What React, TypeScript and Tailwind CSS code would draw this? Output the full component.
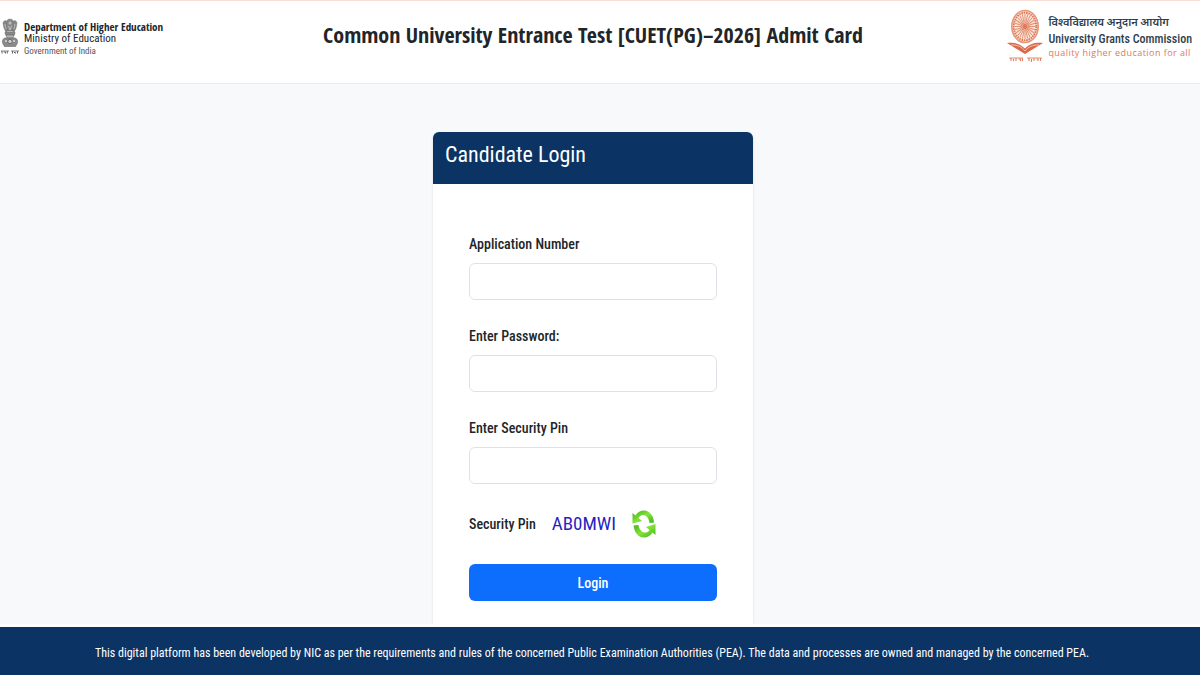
import { useState } from 'react'

const spokes = Array.from({ length: 24 }, (_, i) => i * 15)

function Emblem() {
  return (
    <svg viewBox="0 0 20 38" className="w-5 h-10 shrink-0" aria-hidden="true">
      <g fill="#8a8a8a" stroke="#6c6c6c" strokeWidth="0.6">
        <path d="M7 3 C7 0.5 13 0.5 13 3 L14 8 L12.5 13 H7.5 L6 8 Z" />
        <path d="M6.5 3 C3.5 2 2.5 5 3.5 7 L4 10 L6 14 L7.5 13 L6 8 Z" />
        <path d="M13.5 3 C16.5 2 17.5 5 16.5 7 L16 10 L14 14 L12.5 13 L14 8 Z" />
        <path d="M5 14 H15 L14.5 17 H5.5 Z" />
        <path d="M6 17 H14 L13 20 H7 Z" fill="#b5b5b5" />
        <path d="M5 20 H15 C18 21 18 24 17 26 L15.5 28.5 H4.5 L3 26 C2 24 2 21 5 20 Z" />
      </g>
      <circle cx="10" cy="5" r="1.5" fill="#bdbdbd" />
      <path d="M8.5 8 L10 12 L11.5 8 M5 6 L6 11 M15 6 L14 11" stroke="#c9c9c9" strokeWidth="0.8" fill="none" />
      <circle cx="10" cy="23.5" r="2.2" fill="#ccc" stroke="#5c5c5c" strokeWidth="0.8" />
      <path d="M5 23 H7 M13 23 H15" stroke="#ddd" strokeWidth="1.4" />
      <path d="M1 33 H9 M11 33 H19" stroke="#666" strokeWidth="0.8" />
      <path d="M2 33 V35.5 M3.8 34 H5.5 V35.5 M7.3 33 V35.5 M12.5 33 V35.5 M14 34.5 H15.5 V35.5 M17.5 33 V35.5" stroke="#666" strokeWidth="1" fill="none" />
    </svg>
  )
}

function UgcLogo() {
  return (
    <svg viewBox="0 0 38 54" className="w-[38px] h-[54px] shrink-0" aria-hidden="true">
      <ellipse cx="19" cy="17.5" rx="13.2" ry="16" fill="#fbe3d8" stroke="#e5977a" strokeWidth="1.6" />
      <ellipse cx="19" cy="17.5" rx="11.3" ry="13.8" fill="none" stroke="#dd7656" strokeWidth="1.8" strokeDasharray="1.6 0.8" />
      <g transform="translate(19 17.5) scale(0.82 1)" stroke="#e08b6c" strokeWidth="1">
        {spokes.map((angle) => (
          <line key={angle} x1="0" y1="-3" x2="0" y2="-12.5" transform={`rotate(${angle})`} />
        ))}
      </g>
      <ellipse cx="19" cy="17.5" rx="2.2" ry="2.8" fill="#e07a5c" />
      <path d="M1 34 C8 33 15 35 19 39.5 C23 35 30 33 37 34 L19 45 Z" fill="#d9694a" />
      <path d="M5 36 C11 35.5 16 38 19 42 C22 38 27 35.5 33 36" fill="none" stroke="#f5c4b2" strokeWidth="1" />
      <path d="M3 49 H17 M21 49 H36" stroke="#df8163" strokeWidth="0.9" />
      <path d="M5 49 V52 M7.5 50 V52 M10 49 V52 M12.5 50 H14.5 V52 M16.5 49 V52 M23 49 V52 M25.5 50 V53 M28 49 V52 M30.5 50 H32 V52 M34.5 49 V52" stroke="#df8163" strokeWidth="1.1" fill="none" />
    </svg>
  )
}

function RefreshIcon() {
  return (
    <svg viewBox="0 0 24 30" className="w-6 h-[30px]" aria-hidden="true">
      <defs>
        <linearGradient id="leaf" x1="0" y1="0" x2="1" y2="1">
          <stop offset="0" stopColor="#3fae22" />
          <stop offset="0.5" stopColor="#83e336" />
          <stop offset="1" stopColor="#3cb01f" />
        </linearGradient>
      </defs>
      <path d="M0.5 4 L3.5 6.5 C8 -0.5 18 -0.5 21.5 10 L22 13.5 L17.5 14 C16.5 6 10 3.5 6.5 9 L10 12 L0.5 14.5 Z" fill="url(#leaf)" />
      <path d="M23.5 26 L20.5 23.5 C16 30.5 6 30.5 2.5 21 L1.5 16.5 L6.5 16 C7.5 23.5 14 26 17.5 21 L14 18 L23.5 15 Z" fill="url(#leaf)" />
    </svg>
  )
}

function Field({ id, label, type = 'text' }: { id: string; label: string; type?: string }) {
  return (
    <div className="flex flex-col gap-[7px]">
      <label htmlFor={id} className="text-sm leading-6 font-medium">{label}</label>
      <input id={id} name={id} type={type} className="w-full h-[37px] px-3 bg-white border border-[#dee2e6] rounded-md focus:outline-none focus:border-blue-400" />
    </div>
  )
}

const pins = ['AB0MWI', 'K7RTQ2', 'X4NPLE']

export default function App() {
  const [pinIndex, setPinIndex] = useState(0)

  return (
    <div className="min-h-screen flex flex-col bg-[#f7f9fb] text-[#212529] font-['Roboto_Condensed','Roboto','Noto_Sans',sans-serif]">

      {/* Header */}
      <header className="grid grid-cols-[1fr_auto_1fr] items-start h-[84px] pr-2 bg-white border-t border-t-[#f9dcd6] border-b border-b-[#e9ecef]">
        <div className="flex items-start gap-1 pt-4">
          <Emblem />
          <div className="pt-1 text-[11px] leading-3 whitespace-nowrap">
            <p className="font-bold font-['Open_Sans_Condensed','Open_Sans',sans-serif]">Department of Higher Education</p>
            <p>Ministry of Education</p>
            <p className="text-[9px] text-[#555]">Government of India</p>
          </div>
        </div>
        <h1 className="pt-5 pr-1.5 text-[22px] leading-[26px] font-bold text-center font-['Open_Sans_Condensed','Open_Sans',sans-serif]">Common University Entrance Test [CUET(PG)–2026] Admit Card</h1>
        <div className="flex items-start justify-end gap-1 pt-2">
          <UgcLogo />
          <div className="pt-1.5 text-[#2f3e4e] whitespace-nowrap">
            <p lang="hi" className="text-[11px] leading-4 font-semibold">विश्वविद्यालय अनुदान आयोग</p>
            <p className="text-xs leading-4 font-medium">University Grants Commission</p>
            <p className="text-[9px] leading-3 tracking-wider text-[#e0775c] font-['Open_Sans',sans-serif]">quality higher education for all</p>
          </div>
        </div>
      </header>

      {/* Login card */}
      <main className="flex-1 flex justify-center pt-12 pr-[14px]">
        <section className="w-full max-w-80 flex flex-col bg-white rounded-t-md shadow-sm">
          <h2 className="h-[52px] px-3 pt-2 text-[22px] leading-[30px] text-white bg-[#0b3364] rounded-t-md">Candidate Login</h2>
          <form className="flex flex-col gap-6 px-9 pt-12 pb-5" onSubmit={(e) => e.preventDefault()}>
            <Field id="application" label="Application Number" />
            <Field id="password" label="Enter Password:" type="password" />
            <Field id="pin" label="Enter Security Pin" />
            <div className="flex items-center h-8">
              <span className="text-sm font-medium">Security Pin</span>
              <span className="px-4 text-[19px] text-[#2a1fc0]">{pins[pinIndex]}</span>
              <button type="button" aria-label="Refresh pin" onClick={() => setPinIndex((pinIndex + 1) % pins.length)} className="cursor-pointer">
                <RefreshIcon />
              </button>
            </div>
            <button type="submit" className="h-[37px] text-sm font-medium text-white bg-[#0d6efd] rounded-md hover:bg-blue-700 cursor-pointer">Login</button>
          </form>
        </section>
      </main>

      {/* Footer */}
      <footer className="pt-4 pb-3 pr-4 text-center text-xs leading-5 text-white bg-[#0b3364] border-t-3 border-white">
        This digital platform has been developed by NIC as per the requirements and rules of the concerned Public Examination Authorities (PEA). The data and processes are owned and managed by the concerned PEA.
      </footer>
    </div>
  )
}
